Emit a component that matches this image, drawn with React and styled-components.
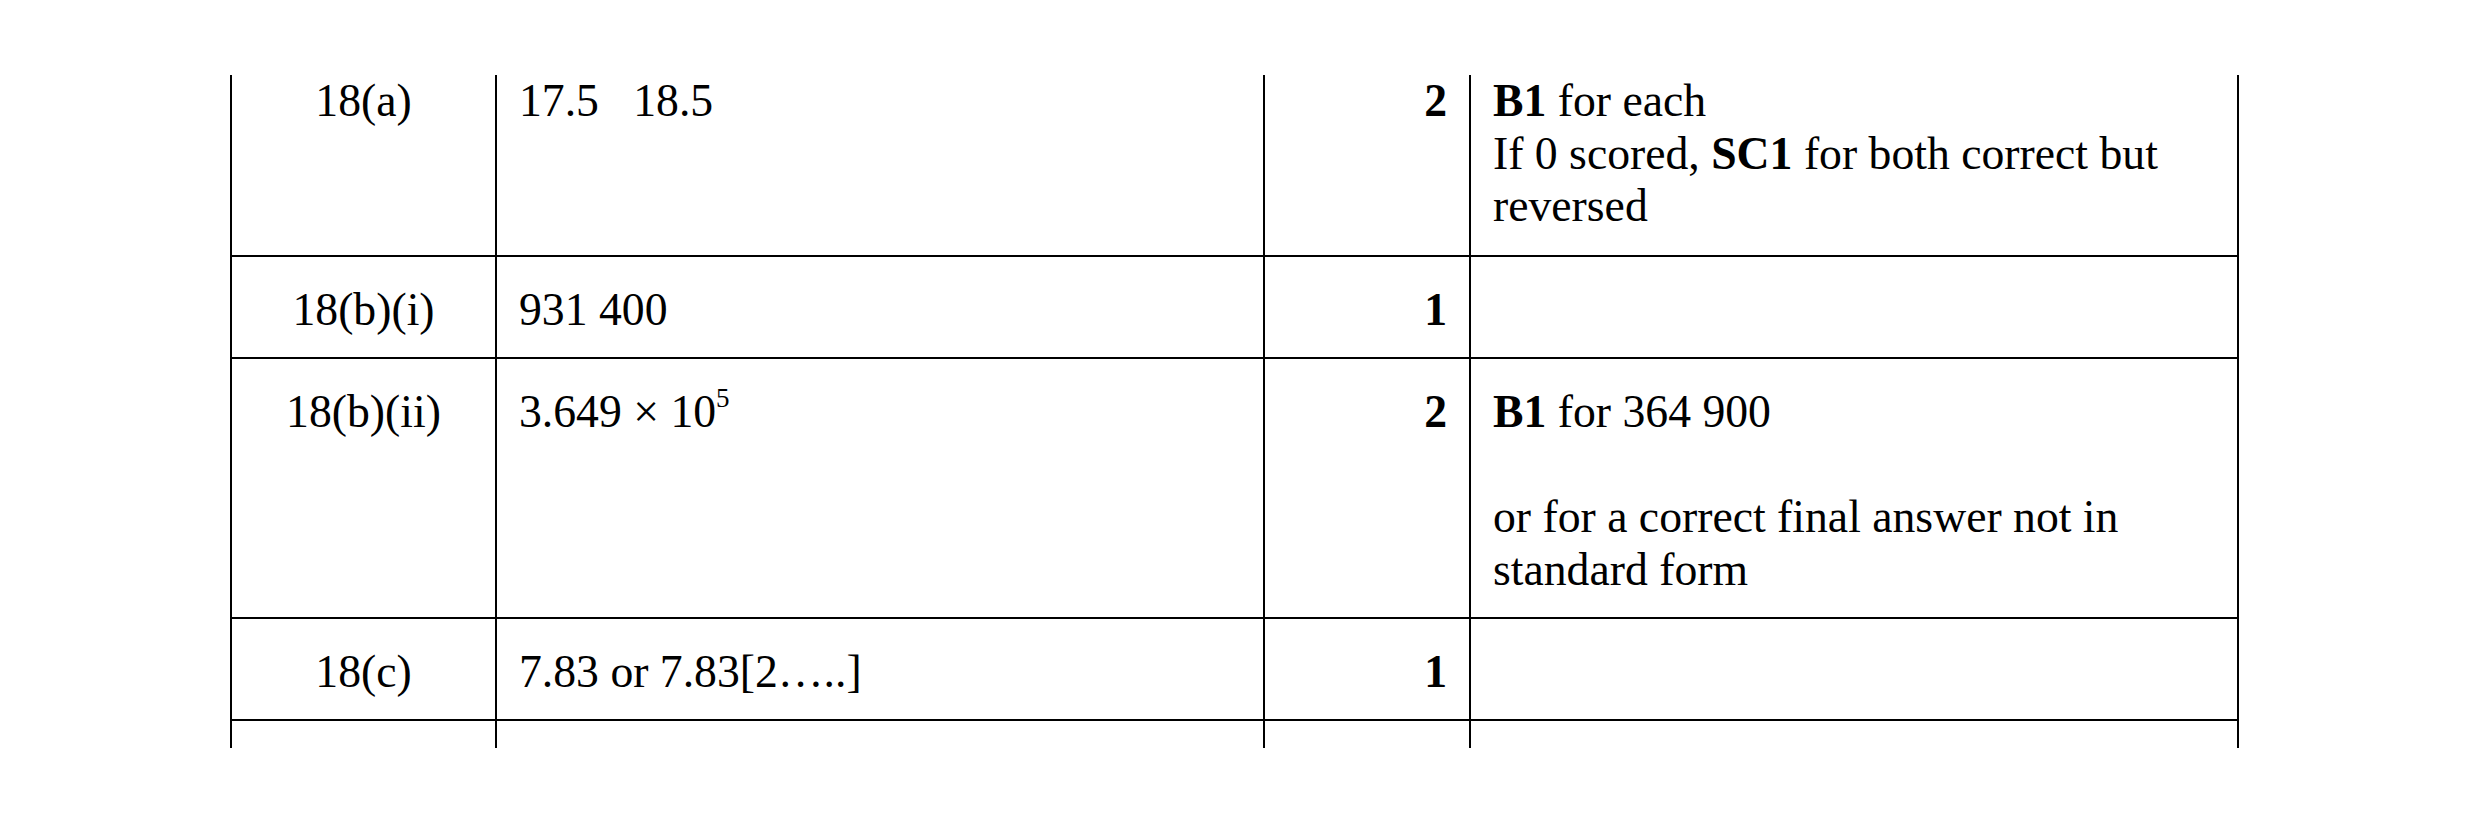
import styled, { createGlobalStyle } from "styled-components"

const GlobalStyle = createGlobalStyle`
    html, body {
        margin: 0;
        padding: 0;
        background: #ffffff;
    }
`

const Page = styled.div`
    box-sizing: border-box;
    width: 2481px;
    height: 822px;
    padding: 75px 0 0 230px;
    background: #ffffff;
    overflow: hidden;
`

const Scheme = styled.table`
    border-collapse: collapse;
    table-layout: fixed;
    width: 2009px;
    font-family: "Liberation Serif", "Times New Roman", serif;
    font-size: 45.7px;
    line-height: 52.6px;
    color: #000000;

    b {
        font-weight: 700;
    }
`

const Col = styled.col`
    width: ${(p) => p.$w}px;
`

const Row = styled.tr`
    height: ${(p) => p.$h}px;
`

const Cell = styled.td`
    border: 2px solid #000000;
    border-top: ${(p) => (p.$first ? "none" : "2px solid #000000")};
    padding: ${(p) => (p.$first ? "0px 22px 0px" : "27px 22px 0px")};
    vertical-align: top;
    text-align: ${(p) => p.$align || "left"};
    font-weight: ${(p) => (p.$bold ? 700 : 400)};
`

const Stub = styled.td`
    border-left: 2px solid #000000;
    border-right: 2px solid #000000;
    padding: 0;
`

const Sup = styled.span`
    font-size: 27px;
    line-height: 0;
    vertical-align: 20px;
`

const rows = [
    {
        id: "18(a)",
        h: 181,
        answer: <>17.5{"\u00a0\u00a0\u00a0"}18.5</>,
        mark: "2",
        notes: (
            <>
                <b>B1</b> for each<br />
                If 0 scored, <b>SC1</b> for both correct but reversed
            </>
        ),
        first: true,
    },
    { id: "18(b)(i)", h: 102, answer: "931 400", mark: "1", notes: null },
    {
        id: "18(b)(ii)",
        h: 260,
        answer: <>3.649 × 10<Sup>5</Sup></>,
        mark: "2",
        notes: (
            <>
                <b>B1</b> for 364 900<br />
                <br />
                or for a correct final answer not in standard form
            </>
        ),
    },
    { id: "18(c)", h: 102, answer: "7.83 or 7.83[2…..]", mark: "1", notes: null },
]

const App = () => {
    return (
        <Page>
            <GlobalStyle />
            <Scheme>
                <colgroup>
                    <Col $w={265} />
                    <Col $w={768} />
                    <Col $w={206} />
                    <Col $w={768} />
                </colgroup>
                <tbody>
                    {rows.map((row) => (
                        <Row key={row.id} $h={row.h}>
                            <Cell $align="center" $first={row.first}>{row.id}</Cell>
                            <Cell $first={row.first}>{row.answer}</Cell>
                            <Cell $align="right" $bold $first={row.first}>{row.mark}</Cell>
                            <Cell $first={row.first}>{row.notes}</Cell>
                        </Row>
                    ))}
                    <Row $h={28}>
                        <Stub />
                        <Stub />
                        <Stub />
                        <Stub />
                    </Row>
                </tbody>
            </Scheme>
        </Page>
    )
}

export default App
